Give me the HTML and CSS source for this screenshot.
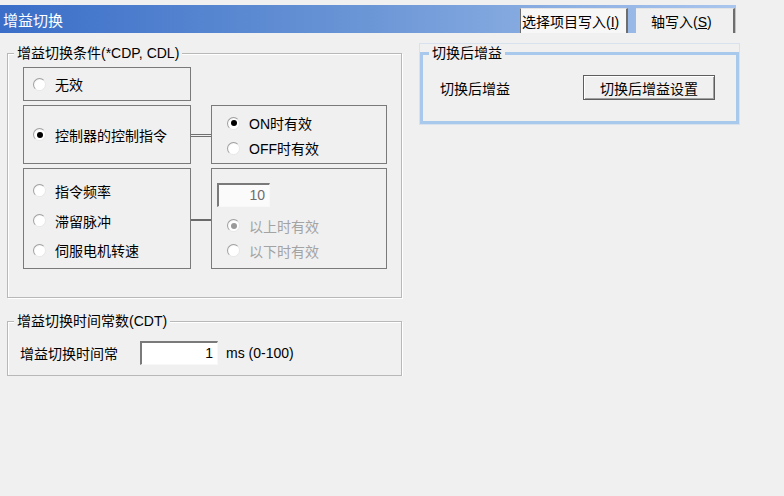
FILE: index.html
```html
<!DOCTYPE html>
<html lang="zh-CN">
<head>
    <meta charset="UTF-8">
    <title>增益切换</title>
    <link rel="stylesheet" href="styles.css">
</head>
<body>
    <div class="titlebar">
        <span class="title">增益切换</span>
        <div class="tabs">
            <button class="tab tab-select">选择项目写入(<u>I</u>)</button>
            <button class="tab tab-axis">轴写入(<u>S</u>)</button>
        </div>
    </div>

    <div class="content">
        <div class="col-left">
            <fieldset class="group group-cond">
                <legend>增益切换条件(*CDP, CDL)</legend>
                <div class="cond-grid">
                    <div class="box box-none">
                        <label class="opt"><span class="radio"></span>无效</label>
                    </div>
                    <div class="box box-ctrl">
                        <label class="opt"><span class="radio on"></span>控制器的控制指令</label>
                    </div>
                    <div class="link link-double"></div>
                    <div class="box box-onoff">
                        <label class="opt"><span class="radio on"></span>ON时有效</label>
                        <label class="opt"><span class="radio"></span>OFF时有效</label>
                    </div>
                    <div class="box box-src">
                        <label class="opt"><span class="radio"></span>指令频率</label>
                        <label class="opt"><span class="radio"></span>滞留脉冲</label>
                        <label class="opt"><span class="radio"></span>伺服电机转速</label>
                    </div>
                    <div class="link link-single"></div>
                    <div class="box box-level">
                        <div class="field field-level">10</div>
                        <label class="opt off"><span class="radio on"></span>以上时有效</label>
                        <label class="opt off"><span class="radio"></span>以下时有效</label>
                    </div>
                </div>
            </fieldset>

            <fieldset class="group group-time">
                <legend>增益切换时间常数(CDT)</legend>
                <div class="time-row">
                    <span class="time-label">增益切换时间常</span>
                    <div class="field field-time">1</div>
                    <span class="unit">ms (0-100)</span>
                </div>
            </fieldset>
        </div>

        <div class="col-right">
            <fieldset class="group group-after">
                <legend>切换后增益</legend>
                <div class="after-row">
                    <span class="after-label">切换后增益</span>
                    <button class="btn">切换后增益设置</button>
                </div>
            </fieldset>
        </div>
    </div>
</body>
</html>
```

FILE: styles.css
```css
body {
    margin: 0;
    background-color: #f0f0f0;
    font-family: "Liberation Sans", "Noto Sans CJK SC", sans-serif;
    font-size: 14px;
    color: #000;
    padding-top: 5px;
}
.titlebar {
    display: flex;
    justify-content: space-between;
    align-items: flex-end;
    width: 736px;
    height: 28px;
    background: linear-gradient(to right, #3a6ec8 0%, #6b96d6 50%, #aac6ee 100%);
}
.title {
    align-self: center;
    color: #fff;
    font-size: 15px;
    padding-left: 3px;
}
.tabs {
    display: flex;
    gap: 8px;
    padding-right: 1px;
}
.tab {
    height: 25px;
    margin: 0;
    font-family: inherit;
    font-size: 14px;
    color: #000;
    border: none;
    border-top: 1px solid #e4e4e4;
    white-space: nowrap;
    overflow: hidden;
}
.tab-select {
    width: 108px;
    padding: 0 0 0 1px;
    text-align: left;
    background-color: #f7f7f7;
    border-left: 1px solid #6e6e6e;
    border-right: 2px solid #6e6e6e;
}
.tab-axis {
    width: 99px;
    padding: 0 0 0 15px;
    text-align: left;
    background-color: #f0f0f0;
    border-right: 2px solid #6e6e6e;
}
.content {
    display: flex;
    gap: 18px;
    padding-left: 7px;
}
.col-left {
    width: 395px;
}
.col-right {
    width: 319px;
}
.group {
    margin: 0;
    padding: 0;
    min-width: 0;
    border: 1px solid #b8b8b8;
    box-shadow: inset 1px 1px #fff, 1px 1px #fff;
}
.group legend {
    margin-left: 6px;
    padding: 0 3px;
    line-height: 18px;
    background-color: #f0f0f0;
}
.group-cond {
    margin-top: 11px;
    padding-top: 5px;
    padding-bottom: 28px;
}
.cond-grid {
    display: grid;
    grid-template-columns: 168px 20px 176px;
    grid-template-rows: 34px 59px 101px;
    row-gap: 4px;
    margin-left: 15px;
}
.box {
    border: 1px solid #7a7a7a;
    display: flex;
    flex-direction: column;
    justify-content: center;
    padding-left: 9px;
}
.box-none {
    grid-column: 1;
    grid-row: 1;
}
.box-ctrl {
    grid-column: 1;
    grid-row: 2;
}
.box-onoff {
    grid-column: 3;
    grid-row: 2;
    padding-left: 15px;
    padding-top: 2px;
}
.box-onoff .opt {
    height: 25px;
}
.box-src {
    grid-column: 1;
    grid-row: 3;
    justify-content: flex-start;
    padding-top: 10px;
}
.box-src .opt {
    height: 24px;
    margin-bottom: 6px;
}
.box-level {
    grid-column: 3;
    grid-row: 3;
    justify-content: flex-start;
    padding-left: 5px;
    padding-top: 14px;
}
.box-level .opt {
    height: 25px;
    padding-left: 10px;
}
.link {
    grid-column: 2;
    align-self: center;
}
.link-double {
    grid-row: 2;
    height: 1px;
    border-top: 1px solid #707070;
    border-bottom: 1px solid #707070;
    margin-top: 1px;
}
.link-single {
    grid-row: 3;
    height: 2px;
    background-color: #6a6a6a;
    margin-top: 3px;
}
.opt {
    display: flex;
    align-items: center;
    gap: 9px;
    white-space: nowrap;
}
.opt.off {
    color: #a3a3a3;
}
.radio {
    width: 11px;
    height: 11px;
    border-radius: 50%;
    border: 1px solid #a0a0a0;
    border-right-color: #e8e8e8;
    border-bottom-color: #e8e8e8;
    background: radial-gradient(circle at 60% 60%, #fff 55%, #e0e0e0 100%);
    display: flex;
    align-items: center;
    justify-content: center;
    flex-shrink: 0;
}
.radio.on::after {
    content: "";
    width: 6px;
    height: 6px;
    border-radius: 50%;
    background-color: #000;
}
.opt.off .radio.on::after {
    background-color: #9a9a9a;
}
.field {
    box-sizing: border-box;
    height: 24px;
    background-color: #fff;
    border: 1px solid #f8f8f8;
    border-top: 2px solid #7a7a7a;
    border-left: 2px solid #7a7a7a;
    text-align: right;
    line-height: 20px;
    padding-right: 4px;
}
.field-level {
    width: 53px;
    margin-bottom: 6px;
    color: #6d6d6d;
    background-color: #fbfbfb;
}
.group-time {
    margin-top: 14px;
    padding-top: 11px;
    padding-bottom: 10px;
}
.time-row {
    display: flex;
    align-items: center;
    margin-left: 12px;
}
.time-label {
    width: 120px;
}
.field-time {
    width: 78px;
}
.unit {
    margin-left: 8px;
}
.group-after {
    margin-top: 11px;
    border: 3px solid #a8c8ec;
    outline: 1px solid #d7e2ee;
    box-shadow: none;
    padding-top: 13px;
    padding-bottom: 21px;
}
.group-after legend {
    margin-left: 6px;
    padding: 0 3px;
}
.after-row {
    display: flex;
    align-items: center;
    margin-left: 17px;
}
.after-label {
    width: 143px;
}
.btn {
    width: 132px;
    height: 25px;
    font-family: inherit;
    font-size: 14px;
    background-color: #f0f0f0;
    border: 1px solid #5e5e5e;
    box-shadow: inset 1px 1px #fff, inset -1px -1px #a0a0a0;
    padding: 0;
}
```
